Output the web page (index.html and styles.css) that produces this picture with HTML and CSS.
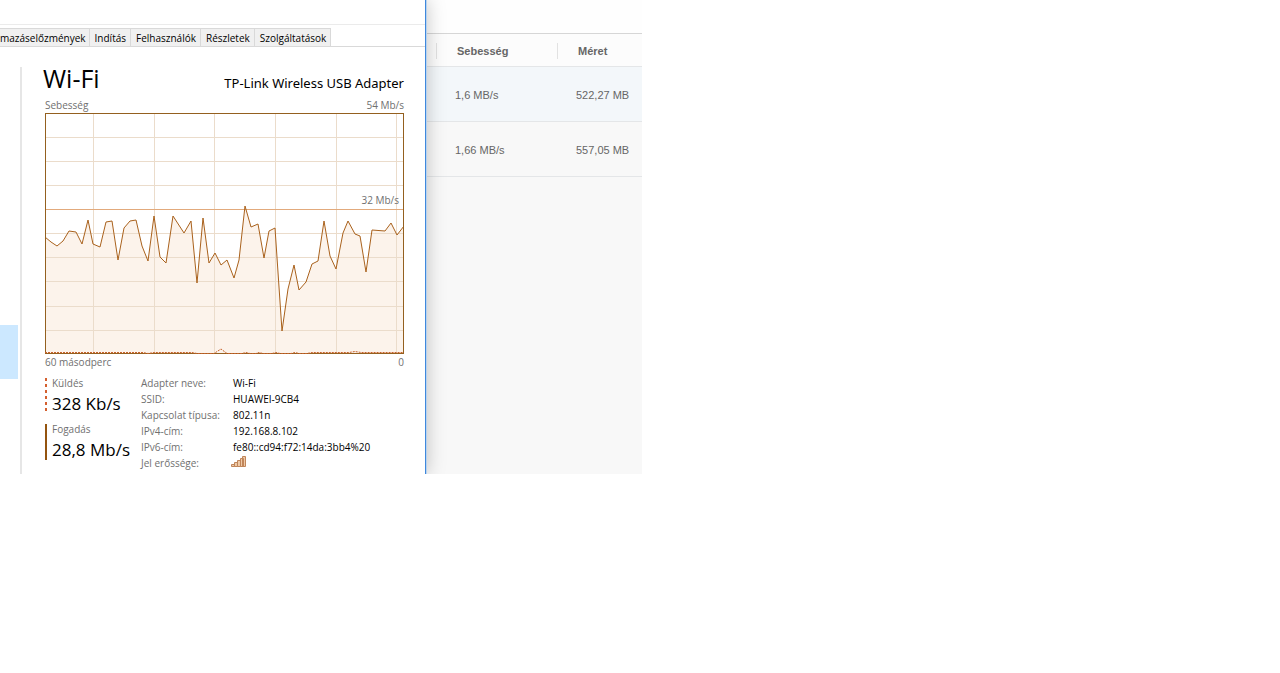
FILE: index.html
```html
<!DOCTYPE html>
<html lang="hu">
<head>
    <meta charset="UTF-8">
    <meta name="viewport" content="width=device-width, initial-scale=1.0">
    <title>Feladatkezelő</title>
    <link rel="stylesheet" href="styles.css">
</head>
<body>
    <div class="desktop">
        <section class="taskmgr">
            <div class="menubar"></div>
            <nav class="tabs">
                <button class="tab tab-cut">mazáselőzmények</button>
                <button class="tab">Indítás</button>
                <button class="tab">Felhasználók</button>
                <button class="tab">Részletek</button>
                <button class="tab">Szolgáltatások</button>
            </nav>
            <div class="performance">
                <aside class="sidebar">
                    <div class="selected"></div>
                </aside>
                <main class="panel">
                    <header class="title">
                        <h1>Wi-Fi</h1>
                        <h2>TP-Link Wireless USB Adapter</h2>
                    </header>
                    <div class="legend"><span>Sebesség</span><span>54 Mb/s</span></div>
                    <div class="graph">
                        <svg viewBox="0 0 359 241">
                            <path class="area" d="M0 241V124L6 129L12 133L18 128L24 118L31 119L37 131L43 107L48 131L55 134L61 109L67 108L73 147L79 115L85 108L91 107L97 133L103 148L109 103L115 144L121 150L128 103L139 120L146 108L152 170L158 105L164 150L170 140L176 152L182 147L189 165L194 147L200 93L206 114L213 111L219 145L224 118L230 115L237 218L243 176L249 152L254 177L261 169L267 151L273 148L279 108L285 143L291 156L298 120L303 108L310 121L315 123L321 159L327 117L340 118L346 110L352 122L359 113V241Z"/>
                            <path class="grid" d="M48.5 0V241M109.5 0V241M169.5 0V241M230.5 0V241M291.5 0V241M351.5 0V241M0 24.500H359M0 48.500H359M0 72.500H359M0 120.500H359M0 144.500H359M0 168.500H359M0 193.500H359M0 217.500H359"/>
                            <path class="limit" d="M0 96.500H359"/>
                            <path class="line" d="M0 124L6 129L12 133L18 128L24 118L31 119L37 131L43 107L48 131L55 134L61 109L67 108L73 147L79 115L85 108L91 107L97 133L103 148L109 103L115 144L121 150L128 103L139 120L146 108L152 170L158 105L164 150L170 140L176 152L182 147L189 165L194 147L200 93L206 114L213 111L219 145L224 118L230 115L237 218L243 176L249 152L254 177L261 169L267 151L273 148L279 108L285 143L291 156L298 120L303 108L310 121L315 123L321 159L327 117L340 118L346 110L352 122L359 113"/>
                            <rect class="frame" x="0.500" y="0.500" width="358" height="240"/>
                            <path class="send" d="M0 239.500H98L103 240.500L109 239.500H147L152 240.500H169L176 236L182 240.500H197L201 239.500L205 240.500H211L214 239.500L218 240.500H227L231 239.500L235 240.500H246L250 239.500L254 240.500H262L267 239.500H304L310 238.500L316 239.500H358"/>
                        </svg>
                        <span class="mark">32 Mb/s</span>
                    </div>
                    <div class="legend legend-time"><span>60 másodperc</span><span>0</span></div>
                    <div class="details">
                        <div class="rates">
                            <div class="rate rate-send">
                                <span>Küldés</span>
                                <strong>328 Kb/s</strong>
                            </div>
                            <div class="rate rate-receive">
                                <span>Fogadás</span>
                                <strong>28,8 Mb/s</strong>
                            </div>
                        </div>
                        <table class="info">
                            <tr><th>Adapter neve:</th><td>Wi-Fi</td></tr>
                            <tr><th>SSID:</th><td>HUAWEI-9CB4</td></tr>
                            <tr><th>Kapcsolat típusa:</th><td>802.11n</td></tr>
                            <tr><th>IPv4-cím:</th><td>192.168.8.102</td></tr>
                            <tr><th>IPv6-cím:</th><td>fe80::cd94:f72:14da:3bb4%20</td></tr>
                            <tr>
                                <th>Jel erőssége:</th>
                                <td>
                                    <svg class="signal" width="15" height="14" viewBox="2 0 15 14">
                                        <path d="M0.500 8.500h3v2h-3zM3.500 6.500h3v4h-3zM6.500 4.500h3v6h-3zM9.500 2.500h3v8h-3zM11.500 0.500h3v10h-3z"/>
                                    </svg>
                                </td>
                            </tr>
                        </table>
                    </div>
                </main>
            </div>
        </section>

        <section class="downloads">
            <table class="list">
                <thead>
                    <tr><th>Sebesség</th><th>Méret</th></tr>
                </thead>
                <tbody>
                    <tr class="active"><td>1,6 MB/s</td><td>522,27 MB</td></tr>
                    <tr><td>1,66 MB/s</td><td>557,05 MB</td></tr>
                </tbody>
            </table>
        </section>
    </div>
</body>
</html>
```
FILE: styles.css
```css
* {
    box-sizing: border-box;
}
body {
    margin: 0;
    background: #fff;
    font-family: "Open Sans", "Noto Sans", sans-serif;
    font-size: 10px;
    color: #000;
}
.desktop {
    display: grid;
    grid-template-columns: 426px 1fr;
    max-width: 642px;
    overflow: hidden;
}

/* task manager window */
.taskmgr {
    position: relative;
    z-index: 1;
    background: #fff;
    border-right: 1px solid #3f88dc;
    box-shadow: 1px 0 0 #b9d3ee, 0 0 18px rgba(0, 0, 0, 0.25);
}
.menubar {
    height: 25px;
    border-bottom: 1px solid #ebebeb;
}
.tabs {
    display: flex;
    height: 22px;
    padding-top: 3px;
    border-bottom: 1px solid #d9d9d9;
}
.tab {
    padding: 0 4px 0 5px;
    border: 1px solid #d9d9d9;
    border-width: 1px 1px 0 0;
    background: #f0f0f0;
    font-family: inherit;
    font-size: 10px;
    line-height: 18px;
    color: #000;
    white-space: nowrap;
}
.tab-cut {
    padding: 0 3px 0 0;
}
.performance {
    display: flex;
    padding-top: 20px;
}
.sidebar {
    width: 22px;
    padding-top: 258px;
    border-right: 2px solid #e6e6e6;
}
.selected {
    width: 18px;
    height: 54px;
    background: #cce8ff;
}
.panel {
    flex: 1;
    padding: 0 21px 3px 23px;
}
.title {
    display: flex;
    justify-content: space-between;
    align-items: baseline;
    height: 31px;
    margin-left: -2px;
}
h1, h2 {
    margin: 0;
    font-weight: 400;
    white-space: nowrap;
}
h1 {
    font-size: 25px;
    line-height: 23px;
}
h2 {
    font-family: "Noto Sans", sans-serif;
    font-size: 13px;
    line-height: 20px;
}
.legend {
    display: flex;
    justify-content: space-between;
    line-height: 15px;
    color: #707070;
}
.legend-time {
    line-height: 17px;
}

/* graph */
.graph {
    position: relative;
}
.graph svg {
    display: block;
    width: 100%;
}
.graph path, .graph rect {
    fill: none;
}
.graph .area {
    fill: #fcf3eb;
}
.graph .grid {
    stroke: #ebdccb;
}
.graph .limit {
    stroke: #e2aa7c;
}
.graph .line {
    stroke: #a9611c;
}
.graph .frame {
    stroke: #94601f;
}
.graph .send {
    stroke: #c8622c;
    stroke-dasharray: 2 1;
}
.mark {
    position: absolute;
    top: 80px;
    right: 5px;
    line-height: 15px;
    color: #707070;
}

/* numbers under the graph */
.details {
    display: flex;
    padding-top: 4px;
}
.rates {
    width: 96px;
    padding-top: 3px;
}
.rate {
    height: 36px;
    margin-bottom: 10px;
    padding-left: 7px;
    white-space: nowrap;
}
.rate-send {
    background: repeating-linear-gradient(#d4602f 0 3px, #fff 3px 6px) 0 0 / 2px 100% no-repeat;
}
.rate-receive {
    background: linear-gradient(#94540f, #94540f) 0 0 / 2px 100% no-repeat;
}
.rate span {
    display: block;
    line-height: 10px;
    color: #707070;
}
.rate strong {
    display: block;
    font-size: 17px;
    font-weight: 400;
    line-height: 31px;
}
.info {
    border-collapse: collapse;
}
.info th, .info td {
    height: 16px;
    padding: 0;
    font-weight: 400;
    line-height: 16px;
    text-align: left;
    white-space: nowrap;
}
.info th {
    width: 92px;
    color: #707070;
}
.signal {
    display: block;
    overflow: visible;
    fill: #efc9a6;
    stroke: #c08559;
}

/* download list behind the window */
.downloads {
    padding-top: 33px;
    background: linear-gradient(#fefefe 33px, #f8f8f8 33px);
    font-family: "Liberation Sans", Arial, sans-serif;
    font-size: 11px;
    color: #666;
}
.list {
    width: 100%;
    border-collapse: separate;
    border-spacing: 0;
}
.list th, .list td {
    padding: 2px 0 0 29px;
    border-bottom: 1px solid #e4e6e8;
    text-align: left;
}
.list th {
    height: 34px;
    padding-left: 31px;
    border-top: 1px solid #d6d6d6;
    background: linear-gradient(#e2e2e2, #e2e2e2) 10px 9px / 1px 16px no-repeat #fcfcfc;
}
.list th:first-child {
    width: 121px;
}
.list td {
    height: 55px;
}
.list .active td {
    background: #f3f7fa;
}
```
